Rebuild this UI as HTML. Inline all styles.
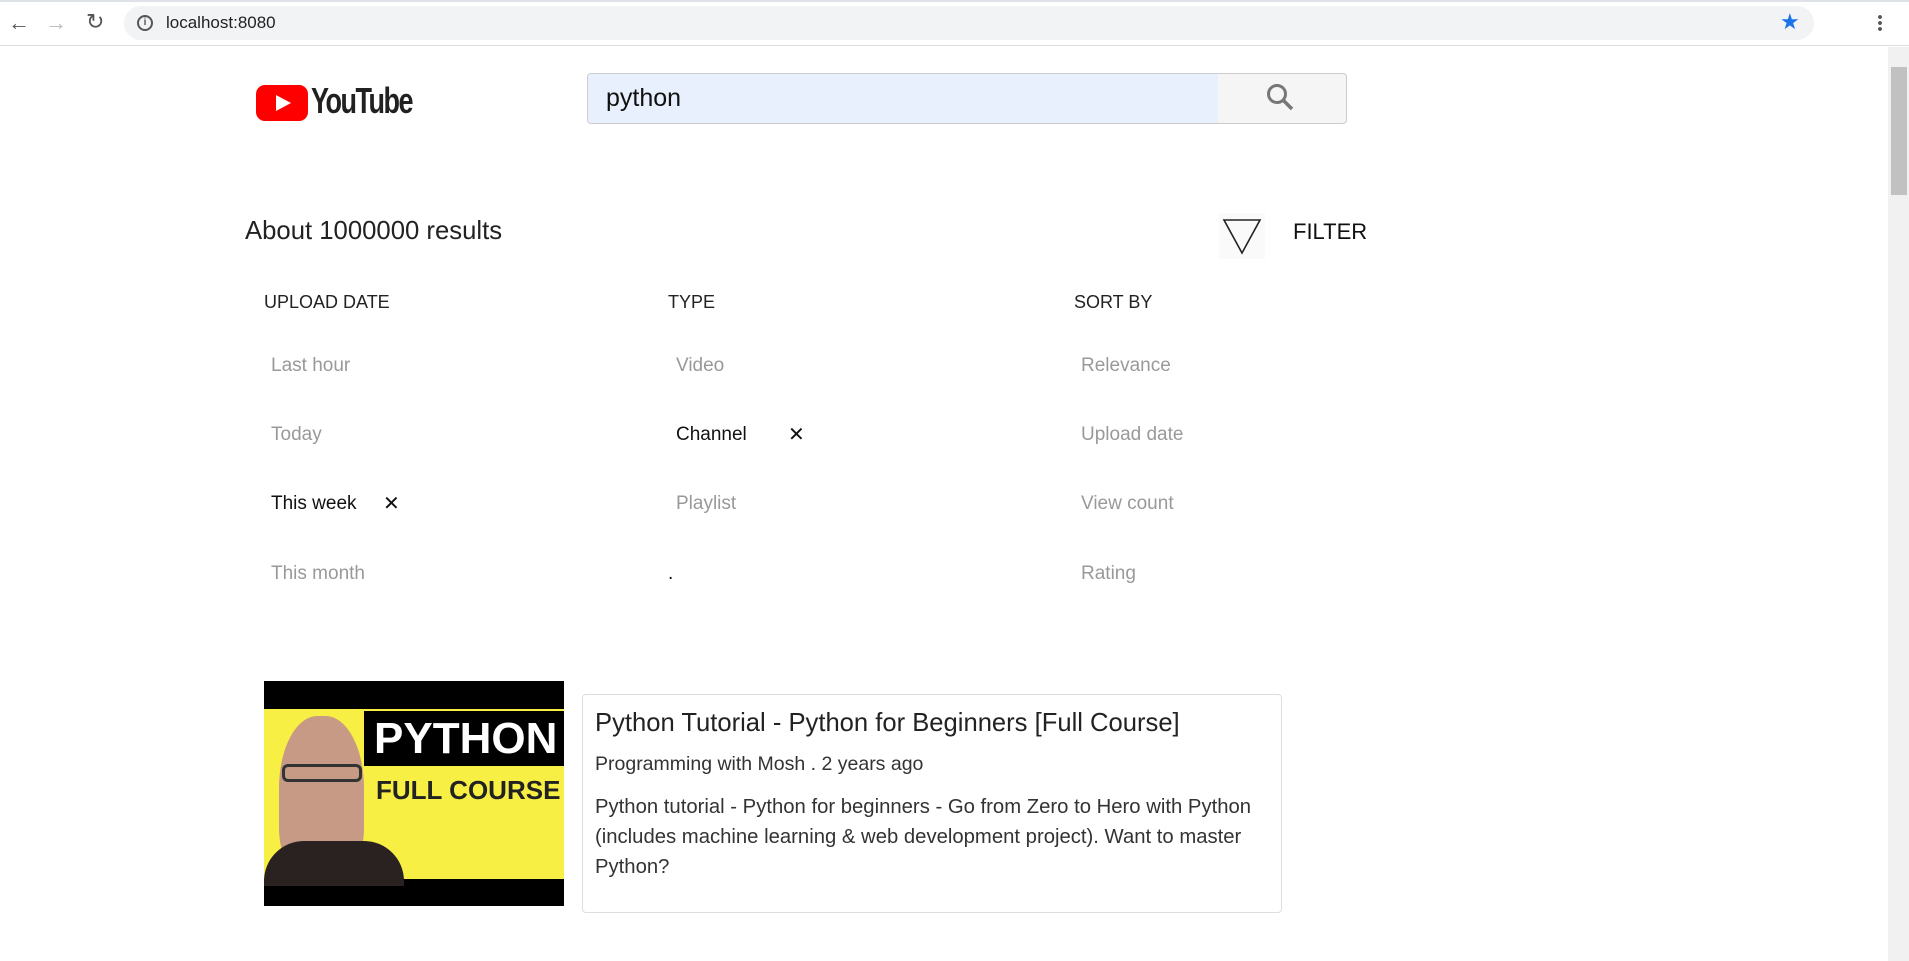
<!DOCTYPE html>
<html><head><meta charset="utf-8"><style>
*{box-sizing:border-box;margin:0;padding:0}
body{width:1909px;height:961px;overflow:hidden;background:#fff;font-family:"Liberation Sans",sans-serif;position:relative;color:#212529}
.a{position:absolute}
.g{color:#999;font-size:19px}
.k{color:#111;font-size:19px}
.h{font-size:18px;color:#222}
</style></head><body>
<div class="a" style="left:0;top:0;width:1909px;height:46px;background:#fff;border-bottom:1px solid #ddd"></div>
<div class="a" style="left:0;top:0;width:1909px;height:2px;background:#dee1e6"></div>
<div class="a" style="left:8px;top:10px;font-size:22px;color:#555">←</div>
<div class="a" style="left:45px;top:10px;font-size:22px;color:#bbb">→</div>
<div class="a" style="left:86px;top:9px;font-size:22px;color:#555">↻</div>
<div class="a" style="left:124px;top:6px;width:1690px;height:34px;border-radius:17px;background:#f1f3f4"></div>
<div class="a" style="left:137px;top:15px;width:16px;height:16px;border:2px solid #555;border-radius:50%;font-size:10px;text-align:center;line-height:12px;font-weight:bold;color:#555">i</div>
<div class="a" style="left:166px;top:13px;font-size:17px;color:#222">localhost:8080</div>
<div class="a" style="left:1780px;top:9px;font-size:22px;color:#1a73e8">★</div>
<div class="a" style="left:1878px;top:14px;width:4px;height:18px;background:radial-gradient(circle,#555 1.8px,transparent 2px) 0 0/4px 6px"></div>
<div class="a" style="left:1888px;top:47px;width:21px;height:914px;background:#f1f1f1"></div>
<div class="a" style="left:1891px;top:67px;width:16px;height:128px;background:#c1c1c1"></div>

<svg class="a" style="left:256px;top:85px" width="52" height="36" viewBox="0 0 52 36"><rect x="0" y="0" width="52" height="36" rx="9" fill="#f00"/><path d="M20 10 L35 18 L20 26Z" fill="#fff"/></svg>
<div class="a" style="left:311px;top:80px;font-size:36px;font-weight:bold;letter-spacing:-2px;color:#212121;transform:scaleX(0.75);transform-origin:left">YouTube</div>

<div class="a" style="left:587px;top:73px;width:760px;height:51px;border:1px solid #ccc;border-radius:4px;background:#f5f5f5;overflow:hidden">
<div style="width:630px;height:100%;background:#e8f0fe"></div></div>
<div class="a" style="left:606px;top:84px;font-size:25px;color:#111">python</div>
<svg class="a" style="left:1265px;top:82px" width="32" height="32" viewBox="0 0 32 32"><circle cx="12" cy="12" r="8.5" fill="none" stroke="#777" stroke-width="3"/><path d="M18 18 L27 27" stroke="#777" stroke-width="3.5"/></svg>

<div class="a" style="left:245px;top:217px;font-size:25.7px;color:#222">About 1000000 results</div>
<div class="a" style="left:1219px;top:213px;width:46px;height:46px;background:#fafafa"></div>
<svg class="a" style="left:1221px;top:215px" width="42" height="40" viewBox="0 0 42 40"><path d="M3 5 L39 5 L21 38Z" fill="none" stroke="#222" stroke-width="1.6"/></svg>
<div class="a" style="left:1293px;top:219px;font-size:22px;color:#111">FILTER</div>

<div class="a h" style="left:264px;top:292px">UPLOAD DATE</div>
<div class="a h" style="left:668px;top:292px">TYPE</div>
<div class="a h" style="left:1074px;top:292px">SORT BY</div>

<div class="a g" style="left:271px;top:355px">Last hour</div>
<div class="a g" style="left:271px;top:424px">Today</div>
<div class="a k" style="left:271px;top:493px">This week</div>
<div class="a k" style="left:383px;top:491px;font-size:20px">✕</div>
<div class="a g" style="left:271px;top:563px">This month</div>

<div class="a g" style="left:676px;top:355px">Video</div>
<div class="a k" style="left:676px;top:424px">Channel</div>
<div class="a k" style="left:788px;top:422px;font-size:20px">✕</div>
<div class="a g" style="left:676px;top:493px">Playlist</div>
<div class="a k" style="left:668px;top:563px">.</div>

<div class="a g" style="left:1081px;top:355px">Relevance</div>
<div class="a g" style="left:1081px;top:424px">Upload date</div>
<div class="a g" style="left:1081px;top:493px">View count</div>
<div class="a g" style="left:1081px;top:563px">Rating</div>

<div class="a" style="left:264px;top:681px;width:300px;height:225px;background:#000;overflow:hidden">
<div class="a" style="left:0;top:28px;width:300px;height:170px;background:#f8ef45"></div>
<div class="a" style="left:100px;top:30px;width:200px;height:55px;background:#000"></div>
<div class="a" style="left:110px;top:33px;font-size:44px;font-weight:bold;color:#fff">PYTHON</div>
<div class="a" style="left:112px;top:94px;font-size:26px;font-weight:bold;color:#222">FULL COURSE</div>
<div class="a" style="left:15px;top:35px;width:85px;height:160px;border-radius:45% 45% 30% 30%;background:#c79a86"></div>
<div class="a" style="left:0;top:160px;width:140px;height:45px;border-radius:40px 40px 0 0;background:#2a2220"></div>
<div class="a" style="left:18px;top:83px;width:80px;height:18px;border:3px solid #333;border-radius:6px"></div>
</div>

<div class="a" style="left:582px;top:694px;width:700px;height:219px;border:1px solid #ddd;border-radius:4px"></div>
<div class="a" style="left:595px;top:709px;font-size:25.6px;color:#222">Python Tutorial - Python for Beginners [Full Course]</div>
<div class="a" style="left:595px;top:753px;font-size:19.5px;color:#333">Programming with Mosh . 2 years ago</div>
<div class="a" style="left:595px;top:792px;width:680px;font-size:20.3px;line-height:30px;color:#333">Python tutorial - Python for beginners - Go from Zero to Hero with Python (includes machine learning &amp; web development project). Want to master Python?</div>
</body></html>
